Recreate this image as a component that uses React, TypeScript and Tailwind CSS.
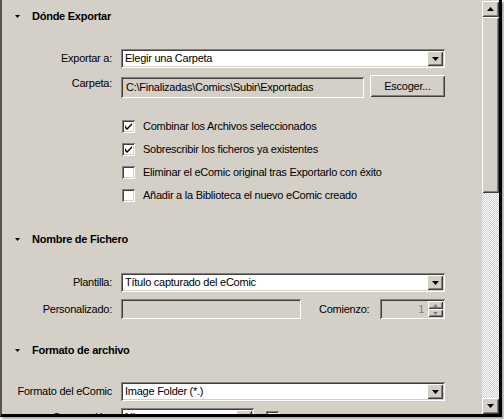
import React from "react";

const sunken =
  "shadow-[inset_1px_1px_0_#808080,inset_-1px_-1px_0_#ffffff,inset_2px_2px_0_#404040,inset_-2px_-2px_0_#d4d0c8]";
const raised =
  "shadow-[inset_1px_1px_0_#ffffff,inset_-1px_-1px_0_#404040,inset_2px_2px_0_#d4d0c8,inset_-2px_-2px_0_#808080]";

function DownTri({ color = "#000" }: { color?: string }) {
  return (
    <svg width="7" height="4" viewBox="0 0 7 4">
      <path d="M0 0H7L3.5 4Z" fill={color} />
    </svg>
  );
}

function Heading({ title }: { title: string }) {
  return (
    <div className="flex h-[32px] shrink-0 items-center pl-[13px]">
      <svg width="5" height="3" viewBox="0 0 5 3" className="mt-[1px]">
        <path d="M0 0H5L2.5 3Z" fill="#000" />
      </svg>
      <span className="ml-[12px] font-bold text-black">{title}</span>
    </div>
  );
}

function Select({ value, w = "w-[324px]" }: { value: string; w?: string }) {
  return (
    <div className={`relative flex h-[19px] items-center bg-white ${w} ${sunken}`}>
      <span className="pl-[4px] leading-none text-black">{value}</span>
      <div
        className={`absolute right-[2px] top-[2px] flex h-[15px] w-[16px] items-center justify-center bg-[#d4d0c8] ${raised}`}
      >
        <DownTri />
      </div>
    </div>
  );
}

function Label({ text }: { text: string }) {
  return <div className="w-[110px] shrink-0 text-right text-black">{text}</div>;
}

function Check({ checked, text }: { checked: boolean; text: string }) {
  return (
    <div className="flex h-[23px] items-center pl-[120px]">
      <div className={`flex h-[13px] w-[13px] items-center justify-center bg-white ${sunken}`}>
        {checked && (
          <svg width="7" height="7" viewBox="0 0 7 7">
            <path d="M0 2v3l2 2l5-5V-0l-5 5z" fill="#000" />
          </svg>
        )}
      </div>
      <span className="ml-[8px] text-black">{text}</span>
    </div>
  );
}

export default function App() {
  return (
    <div
      className="h-[420px] w-[504px] overflow-hidden bg-white text-[11px] tracking-[-0.25px]"
      style={{ fontFamily: '"Liberation Sans", Arial, sans-serif' }}
    >
      <div className="flex h-[417px] w-[502px] border-b-[3px] border-l-2 border-r-[3px] border-b-black border-l-[#555] border-r-black bg-[#d4d0c8] shadow-[2px_2px_2px_rgba(0,0,0,0.35)]">
        <div className="w-[480px] overflow-hidden">
          <Heading title="Dónde Exportar" />

          <div className="mt-[17px] flex items-center">
            <Label text="Exportar a:" />
            <div className="ml-[9px]">
              <Select value="Elegir una Carpeta" />
            </div>
          </div>

          <div className="mt-[7px] flex h-[23px]">
            <Label text="Carpeta:" />
            <div className="ml-[9px] flex w-[324px] justify-between">
              <div className={`flex h-[21px] w-[243px] items-center self-end ${sunken}`}>
                <span className="pl-[5px] text-black">C:\Finalizadas\Comics\Subir\Exportadas</span>
              </div>
              <div
                className={`flex h-[22px] w-[75px] items-center justify-center bg-[#d4d0c8] text-black ${raised}`}
              >
                Escoger...
              </div>
            </div>
          </div>

          <div className="mt-[17px] flex flex-col">
            <Check checked text="Combinar los Archivos seleccionados" />
            <Check checked text="Sobrescribir los ficheros ya existentes" />
            <Check checked={false} text="Eliminar el eComic original tras Exportarlo con éxito" />
            <Check checked={false} text="Añadir a la Biblioteca el nuevo eComic creado" />
          </div>

          <div className="mt-[16px]">
            <Heading title="Nombre de Fichero" />
          </div>

          <div className="mt-[18px] flex items-center">
            <Label text="Plantilla:" />
            <div className="ml-[9px]">
              <Select value="Título capturado del eComic" />
            </div>
          </div>

          <div className="mt-[7px] flex h-[20px] items-center">
            <Label text="Personalizado:" />
            <div className="ml-[9px] flex w-[324px] items-center">
              <div className={`h-[20px] w-[180px] ${sunken}`} />
              <span className="ml-[18px] text-black">Comienzo:</span>
              <div className={`relative ml-auto flex h-[20px] w-[65px] items-center justify-end ${sunken}`}>
                <span className="pr-[21px] text-[#808080]">1</span>
                <div className="absolute right-[2px] top-[2px] flex w-[15px] flex-col">
                  <div className={`flex h-[8px] items-center justify-center bg-[#d4d0c8] ${raised}`}>
                    <svg width="5" height="3" viewBox="0 0 5 3">
                      <path d="M2.5 0L5 3H0Z" fill="#808080" />
                    </svg>
                  </div>
                  <div className={`flex h-[8px] items-center justify-center bg-[#d4d0c8] ${raised}`}>
                    <svg width="5" height="3" viewBox="0 0 5 3">
                      <path d="M0 0H5L2.5 3Z" fill="#808080" />
                    </svg>
                  </div>
                </div>
              </div>
            </div>
          </div>

          <div className="mt-[15px]">
            <Heading title="Formato de archivo" />
          </div>

          <div className="mt-[16px] flex items-center">
            <Label text="Formato del eComic" />
            <div className="ml-[9px]">
              <Select value="Image Folder (*.)" />
            </div>
          </div>

          <div className="mt-[7px] flex items-center">
            <Label text="Compresión:" />
            <div className="ml-[9px] flex items-center">
              <Select value="Ninguna" w="w-[133px]" />
              <div className={`ml-[12px] h-[13px] w-[13px] bg-white ${sunken}`} />
            </div>
          </div>
        </div>

        <div className="flex w-[17px] flex-col pt-[1px]">
          <div className={`flex h-[16px] shrink-0 items-center justify-center bg-[#d4d0c8] ${raised}`}>
            <svg width="7" height="4" viewBox="0 0 7 4">
              <path d="M3.5 0L7 4H0Z" fill="#000" />
            </svg>
          </div>
          <div className={`h-[176px] shrink-0 bg-[#d4d0c8] ${raised}`} />
          <div className="flex-1 bg-[image:repeating-conic-gradient(#ffffff_0_25%,#d4d0c8_0_50%)] bg-[length:2px_2px]" />
          <div className={`flex h-[16px] shrink-0 items-center justify-center bg-[#d4d0c8] ${raised}`}>
            <DownTri />
          </div>
        </div>
      </div>
    </div>
  );
}
